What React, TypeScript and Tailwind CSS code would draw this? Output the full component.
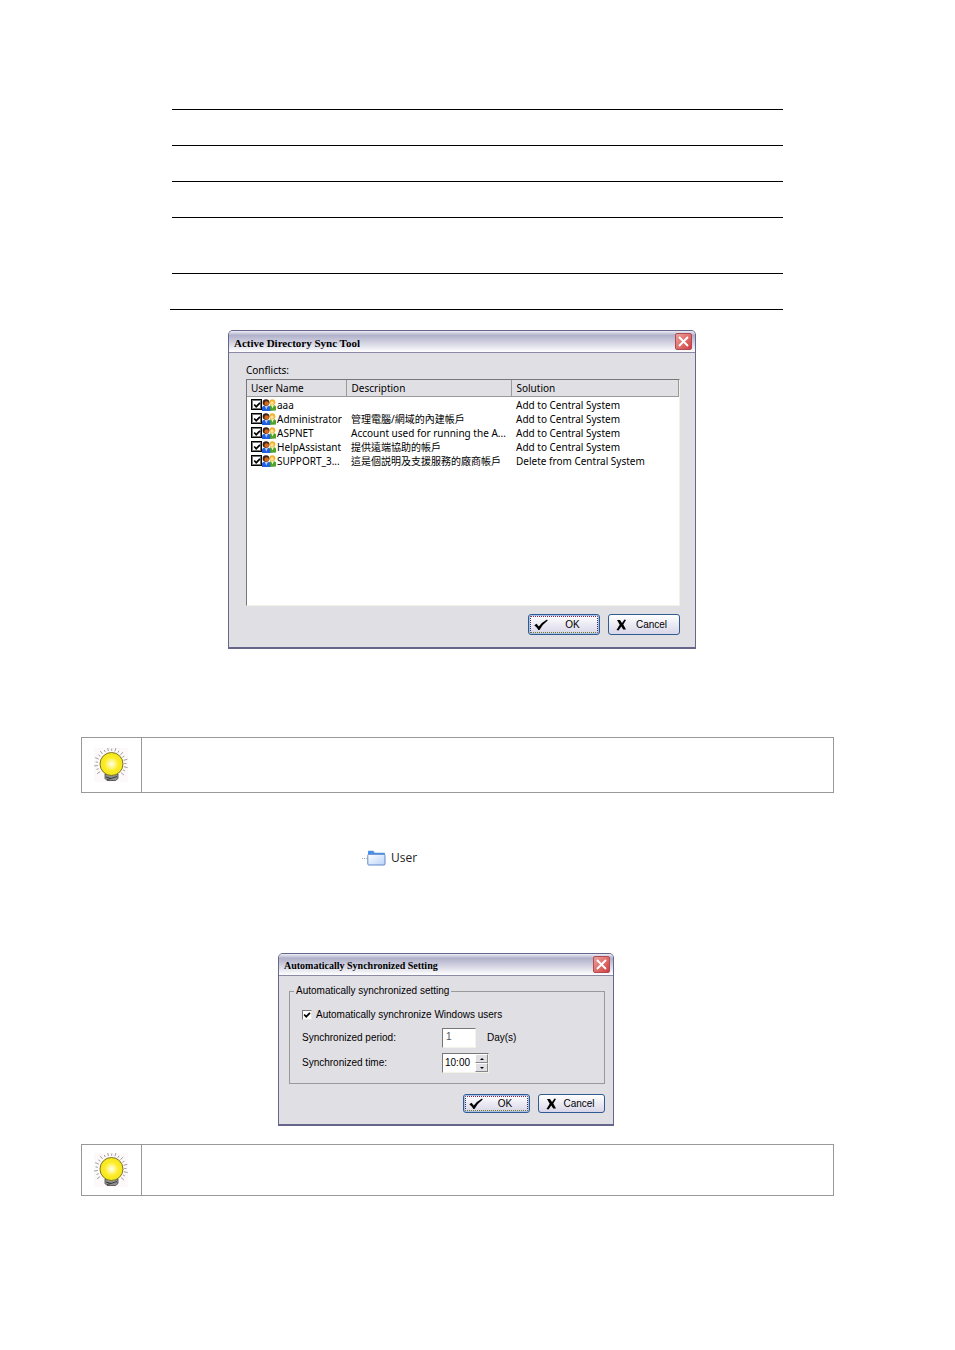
import type { ReactNode } from "react";

const users = [
  { name: "aaa", description: "", solution: "Add to Central System" },
  { name: "Administrator", description: "管理電腦/網域的內建帳戶", solution: "Add to Central System" },
  { name: "ASPNET", description: "Account used for running the A...", solution: "Add to Central System" },
  { name: "HelpAssistant", description: "提供遠端協助的帳戶", solution: "Add to Central System" },
  { name: "SUPPORT_3...", description: "這是個説明及支援服務的廠商帳戶", solution: "Delete from Central System" },
];

function PeopleIcon() {
  return (
    <svg viewBox="0 0 14 12" className="h-3 w-[14px] shrink-0" aria-hidden="true">
      <path d="M7 12V8q0-2 3.500-2T14 8v3.500z" fill="#4fa32c" />
      <path d="M9 6l1.500 3.500L12 6z" fill="#f6f2c0" />
      <circle cx="10.300" cy="3.200" r="3" fill="#f1b32f" />
      <circle cx="10" cy="4" r="1.700" fill="#ffe49a" />
      <path d="M0 12V9Q0 6.500 4 6.500T8.200 9V12z" fill="#1f5fe0" />
      <path d="M2.800 7l1.500 3.500L6 7z" fill="#b9d3ff" />
      <circle cx="4" cy="3.600" r="3.300" fill="#3c2418" />
      <circle cx="4.700" cy="4.500" r="2.300" fill="#d9681e" />
    </svg>
  );
}

function CheckBox({ label, thin = false }: { label: string; thin?: boolean }) {
  return (
    <span className="grid shrink-0">
      <input
        type="checkbox"
        defaultChecked
        aria-label={label}
        className={
          thin
            ? "peer col-start-1 row-start-1 size-[10px] appearance-none border border-[#e8e6e0] border-t-[#777] border-l-[#777] bg-white"
            : "peer col-start-1 row-start-1 size-[11px] appearance-none border border-black bg-white shadow-[inset_0_0_0_1px_#777]"
        }
      />
      <svg
        viewBox="0 0 10 10"
        className="pointer-events-none invisible col-start-1 row-start-1 size-[10px] self-center justify-self-center peer-checked:visible"
        aria-hidden="true"
      >
        <path d="M2.200 4.500L4.200 6.700L8 2.800" fill="none" stroke="#000" strokeWidth="1.700" />
      </svg>
    </span>
  );
}

function Dialog({
  title,
  titleClass,
  className,
  children,
}: {
  title: string;
  titleClass: string;
  className: string;
  children: ReactNode;
}) {
  return (
    <section
      className={`flex max-w-full flex-col rounded-t-[5px] border border-b-2 border-[#66668c] bg-[#e0dfe4] ${className}`}
    >
      <header className="flex h-[22px] items-center justify-between rounded-t-[4px] border-b border-[#8a8aa6] bg-linear-to-b from-[#eeeef6] via-[#b0b0ca] via-20% to-white pr-[3px] pl-[5px]">
        <h2 className={`font-['Liberation_Serif',serif] font-bold text-black ${titleClass}`}>{title}</h2>
        <button
          type="button"
          aria-label="Close"
          className="flex size-[17px] items-center justify-center rounded-[2px] border border-[#b14a52] bg-linear-to-br from-[#eba09c] to-[#cf3b40]"
        >
          <svg viewBox="0 0 11 11" className="size-[11px]" aria-hidden="true">
            <path d="M1 1l9 9M10 1l-9 9" stroke="#fff" strokeWidth="1.900" />
          </svg>
        </button>
      </header>
      {children}
    </section>
  );
}

function OkButton({ className }: { className: string }) {
  return (
    <button
      type="button"
      className={`flex items-center rounded-[3px] border border-[#2d5b92] bg-linear-to-b from-white to-[#d8d6e8] p-px shadow-[inset_0_0_0_1px_#a9c1e8] ${className}`}
    >
      <span className="flex h-full w-full items-center border border-dotted border-[#34344c] border-t-[#8c2448] border-b-[#77771c] pl-[3px]">
        <svg viewBox="0 0 14 12" className="h-3 w-[14px]" aria-hidden="true">
          <path d="M0.300 6.300L2.500 4.800L4.800 7.600Q8 3 13 0.400L13.700 1.600Q9 5 5.500 11H4.300Q3 8.500 0.300 6.300Z" fill="#000" />
        </svg>
        <span className="flex-1 text-center">OK</span>
      </span>
    </button>
  );
}

function CancelButton({ className }: { className: string }) {
  return (
    <button
      type="button"
      className={`flex items-center rounded-[3px] border border-[#2d5b92] bg-linear-to-b from-white to-[#d8d6e8] pr-[3px] pl-[7px] ${className}`}
    >
      <svg viewBox="0 0 11 12" className="h-3 w-[11px]" aria-hidden="true">
        <path d="M1 1h3l2 3 2.500-3.500L10 1 7.300 5.500 10 10.500H7.200L5.300 7.600 2.500 11.500 0.500 11 3.700 5.800Z" fill="#000" />
      </svg>
      <span className="flex-1 text-center">Cancel</span>
    </button>
  );
}

const rays = Array.from({ length: 19 }, (_, i) => {
  const angle = ((145 + i * 14.2) * Math.PI) / 180;
  const inner = 13.2;
  const outer = i % 2 ? 15.5 : 17;
  return {
    x1: 17 + inner * Math.cos(angle),
    y1: 16 + inner * Math.sin(angle),
    x2: 17 + outer * Math.cos(angle),
    y2: 16 + outer * Math.sin(angle),
  };
});

function BulbIcon() {
  return (
    <svg viewBox="0 0 34 34" className="size-[34px]" aria-hidden="true">
      <defs>
        <radialGradient id="glow">
          <stop offset="0" stopColor="#fffef0" />
          <stop offset="0.300" stopColor="#fff78c" />
          <stop offset="0.600" stopColor="#fdec25" />
          <stop offset="1" stopColor="#f5e51c" />
        </radialGradient>
      </defs>
      <rect width="34" height="34" fill="#fdf8f9" />
      {rays.map((ray, i) => (
        <line key={i} {...ray} stroke="#777" strokeWidth="0.700" />
      ))}
      <path d="M11 26h13v4.500L21.500 32.500H13L11 30.500z" fill="#8d8f92" stroke="#444" strokeWidth="0.800" />
      <path d="M12 29l5 1.500 6-2M13 31.500l4-1" fill="none" stroke="#333" strokeWidth="0.900" />
      <circle cx="17.500" cy="16" r="11.500" fill="url(#glow)" stroke="#6d6823" strokeWidth="0.900" />
    </svg>
  );
}

function Note({ className }: { className: string }) {
  return (
    <aside className={`mr-[121px] ml-[81px] flex border border-[#999] ${className}`}>
      <div className="flex w-[60px] shrink-0 items-center justify-center border-r border-[#999] pr-px">
        <BulbIcon />
      </div>
      <div className="flex-1" />
    </aside>
  );
}

function FolderIcon() {
  return (
    <svg viewBox="0 0 24 16" className="h-4 w-6" aria-hidden="true">
      <defs>
        <linearGradient id="folder" x1="0" y1="0" x2="1" y2="1">
          <stop offset="0" stopColor="#fff" />
          <stop offset="1" stopColor="#b7d3f7" />
        </linearGradient>
      </defs>
      <path d="M0 8.500h5" stroke="#aaa" strokeDasharray="1 1" />
      <path d="M6 3V1.500q0-.7.700-.7h4.500l1.500 2H22q1 0 1 1V5H6z" fill="#4a90ec" />
      <rect x="5.800" y="4.300" width="17.200" height="10.700" rx="1" fill="url(#folder)" stroke="#6387cf" />
    </svg>
  );
}

export default function App() {
  return (
    <main className="min-h-[1350px] bg-white pt-[109px] text-black">
      <div className="mx-[172px]">
        <hr className="border-black" />
        <hr className="mt-[35px] border-black" />
        <hr className="mt-[35px] border-black" />
        <hr className="mt-[35px] border-black" />
        <hr className="mt-[55px] border-black" />
        <hr className="mt-[35px] -ml-[2px] border-black" />
      </div>

      <Dialog
        title="Active Directory Sync Tool"
        titleClass="text-[11px] leading-[14px] pt-[2px]"
        className="mt-5 ml-[228px] w-[468px]"
      >
        <div className="flex flex-col pt-[10px] pr-[15px] pb-3 pl-[17px] font-['Noto_Sans','Noto_Sans_CJK_TC',sans-serif] text-[10px] leading-[14px]">
          <p>Conflicts:</p>
          <div className="mt-[2px] h-[227px] border border-[#f4f2e6] border-t-[#777] border-l-[#777] bg-white">
            <table className="w-full table-fixed border-collapse text-left">
              <colgroup>
                <col className="w-[99px]" />
                <col className="w-[165px]" />
                <col />
              </colgroup>
              <thead className="bg-[#e0dfe4]">
                <tr className="h-4">
                  <th className="border-r border-b border-[#999] p-0 pt-px pl-1 font-normal">User Name</th>
                  <th className="border-r border-b border-[#999] p-0 pt-px pl-[5px] font-normal">Description</th>
                  <th className="border-r border-b border-[#999] p-0 pt-px pl-[5px] font-normal">Solution</th>
                </tr>
              </thead>
              <tbody className="before:block before:h-px before:content-['']">
                {users.map((user) => (
                  <tr key={user.name} className="h-[14px] whitespace-nowrap">
                    <td className="p-0 pl-1">
                      <span className="flex h-[14px] items-center">
                        <CheckBox label={user.name} />
                        <PeopleIcon />
                        <span className="pl-px">{user.name}</span>
                      </span>
                    </td>
                    <td className="p-0 pl-[5px]">
                      <span className="block h-[14px]">{user.description}</span>
                    </td>
                    <td className="p-0 pl-[5px]">{user.solution}</td>
                  </tr>
                ))}
              </tbody>
            </table>
          </div>
          <div className="mt-2 flex justify-end gap-2 font-['Liberation_Sans',sans-serif]">
            <OkButton className="h-[21px] w-[72px]" />
            <CancelButton className="h-[21px] w-[72px]" />
          </div>
        </div>
      </Dialog>

      <Note className="mt-[88px] h-14" />

      <div className="mt-[57px] ml-[362px] flex h-4 items-center gap-[5px]">
        <FolderIcon />
        <span className="font-['Open_Sans',sans-serif] text-[12px] leading-4 text-[#222]">User</span>
      </div>

      <Dialog
        title="Automatically Synchronized Setting"
        titleClass="text-[10px] leading-[14px] pt-[2px]"
        className="mt-[87px] ml-[278px] w-[336px]"
      >
        <div className="flex flex-col px-2 pt-2 pb-[11px] font-['Liberation_Sans',sans-serif] text-[10px] leading-[14px]">
          <fieldset className="ml-[2px] h-[100px] border border-[#999] px-3">
            <legend className="-ml-2 px-[2px]">Automatically synchronized setting</legend>
            <label className="mt-[10px] flex items-center gap-1">
              <CheckBox label="Automatically synchronize Windows users" thin />
              Automatically synchronize Windows users
            </label>
            <div className="mt-[6px] flex h-5 items-center">
              <label htmlFor="period" className="w-[140px]">
                Synchronized period:
              </label>
              <input
                id="period"
                defaultValue="1"
                className="h-5 w-[34px] border border-[#f4f2e6] border-t-[#777] border-l-[#777] bg-white px-[3px] pb-1 text-[#555]"
              />
              <span className="pl-[11px]">Day(s)</span>
            </div>
            <div className="mt-[5px] flex h-5 items-center">
              <label htmlFor="time" className="w-[140px]">
                Synchronized time:
              </label>
              <div className="flex h-5 w-[47px] border border-[#f4f2e6] border-t-[#777] border-l-[#777] bg-white">
                <input id="time" defaultValue="10:00" className="w-8 bg-white pl-[2px]" />
                <div className="flex flex-1 flex-col">
                  <button
                    type="button"
                    aria-label="Later"
                    className="flex flex-1 items-center justify-center border border-white border-r-[#888] border-b-[#888] bg-[#e0dfe4]"
                  >
                    <svg viewBox="0 0 4 2" className="h-[2px] w-1" aria-hidden="true">
                      <path d="M0 2L2 0L4 2z" />
                    </svg>
                  </button>
                  <button
                    type="button"
                    aria-label="Earlier"
                    className="flex flex-1 items-center justify-center border border-white border-r-[#888] border-b-[#888] bg-[#e0dfe4]"
                  >
                    <svg viewBox="0 0 4 2" className="h-[2px] w-1" aria-hidden="true">
                      <path d="M0 0L2 2L4 0z" />
                    </svg>
                  </button>
                </div>
              </div>
            </div>
          </fieldset>
          <div className="mt-[10px] flex justify-end gap-2">
            <OkButton className="h-[19px] w-[67px]" />
            <CancelButton className="h-[19px] w-[67px]" />
          </div>
        </div>
      </Dialog>

      <Note className="mt-[18px] h-[52px]" />
    </main>
  );
}
